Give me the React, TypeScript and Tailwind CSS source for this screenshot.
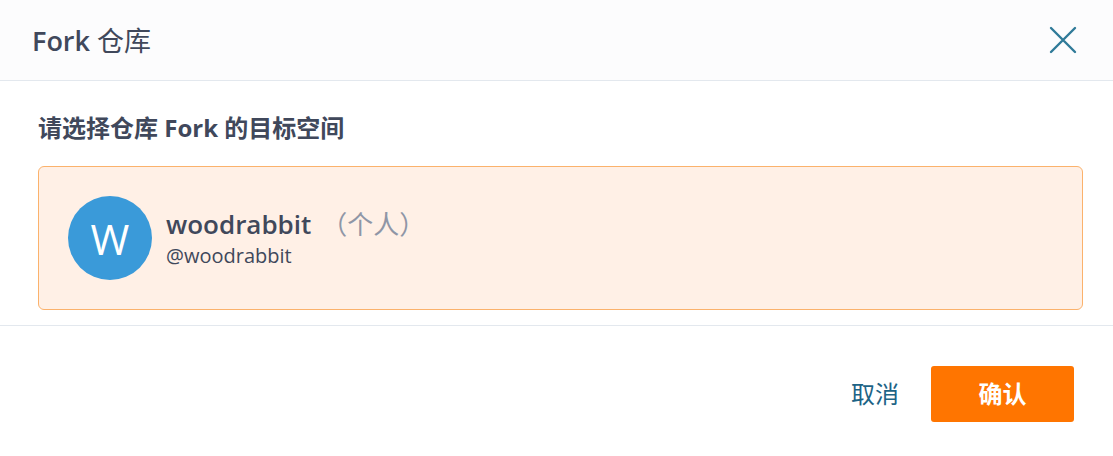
export default function App() {
  return (
    <div
      className="w-[1113px] h-[456px] bg-white text-[#40485b] overflow-hidden"
      style={{ fontFamily: '"Open Sans", "Noto Sans CJK SC", sans-serif' }}
    >
      {/* Header */}
      <div className="h-[81px] bg-[#fcfcfd] border-b border-[#e3e8ee] flex items-center justify-between pl-[32px] pr-[36px]">
        <h2 className="text-[27px] leading-none font-semibold text-[#40485b]">
          Fork <span className="font-normal">仓库</span>
        </h2>
        <button className="text-[#2f7a98]">
          <svg width="28" height="28" viewBox="0 0 28 28" fill="none" stroke="currentColor" strokeWidth="2.4" strokeLinecap="round">
            <path d="M2 2L26 26M26 2L2 26" />
          </svg>
        </button>
      </div>

      {/* Body */}
      <div className="pl-[38px] pr-[30px] pt-[32px] pb-[15px] border-b border-[#e3e8ee]">
        <p className="text-[24px] font-bold leading-[30px] text-[#40485b]">请选择仓库 Fork 的目标空间</p>
        <div className="mt-[23px] h-[144px] rounded-[6px] border border-[#fbb26c] bg-[#fff0e6] flex items-center pl-[29px]">
          <div className="w-[84px] h-[84px] rounded-full bg-[#3a9ad9] flex items-center justify-center text-white text-[42px] font-normal">
            W
          </div>
          <div className="ml-[14px] flex flex-col">
            <div className="text-[26px] leading-[34px]">
              <span className="font-semibold text-[#40485b]">woodrabbit</span>
              <span className="text-[#8f96a6] ml-[10px]">（个人）</span>
            </div>
            <div className="text-[20px] leading-[26px] mt-[2px] text-[#40485b]">@woodrabbit</div>
          </div>
        </div>
      </div>

      {/* Footer */}
      <div className="flex items-center justify-end gap-[32px] pr-[39px] pt-[40px]">
        <button className="text-[24px] text-[#1d6386]">取消</button>
        <button className="w-[143px] h-[56px] rounded-[3px] bg-[#ff7500] text-white text-[24px] font-bold">
          确认
        </button>
      </div>
    </div>
  );
}
